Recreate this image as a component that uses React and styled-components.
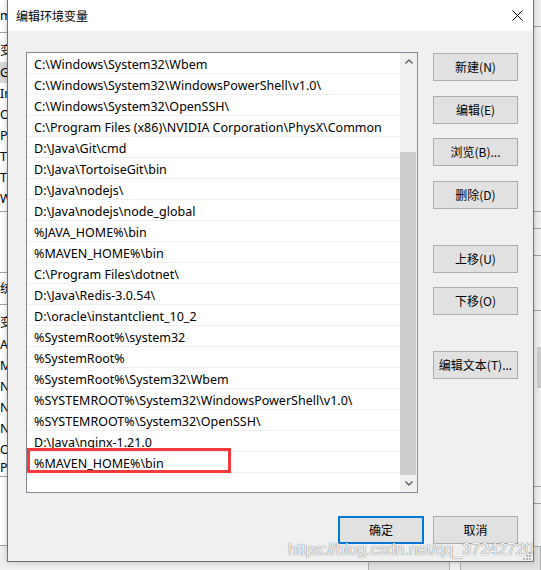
import React from 'react';
import styled, { createGlobalStyle } from 'styled-components';

const GlobalStyle = createGlobalStyle`
  html, body {
    margin: 0;
    padding: 0;
  }
  body {
    background: #f0f0f0;
    font-family: "Noto Sans", "Noto Sans CJK SC", sans-serif;
  }
`;

const paths = [
    'C:\\Windows\\System32\\Wbem',
    'C:\\Windows\\System32\\WindowsPowerShell\\v1.0\\',
    'C:\\Windows\\System32\\OpenSSH\\',
    'C:\\Program Files (x86)\\NVIDIA Corporation\\PhysX\\Common',
    'D:\\Java\\Git\\cmd',
    'D:\\Java\\TortoiseGit\\bin',
    'D:\\Java\\nodejs\\',
    'D:\\Java\\nodejs\\node_global',
    '%JAVA_HOME%\\bin',
    '%MAVEN_HOME%\\bin',
    'C:\\Program Files\\dotnet\\',
    'D:\\Java\\Redis-3.0.54\\',
    'D:\\oracle\\instantclient_10_2',
    '%SystemRoot%\\system32',
    '%SystemRoot%',
    '%SystemRoot%\\System32\\Wbem',
    '%SYSTEMROOT%\\System32\\WindowsPowerShell\\v1.0\\',
    '%SYSTEMROOT%\\System32\\OpenSSH\\',
    'D:\\Java\\nginx-1.21.0',
    '%MAVEN_HOME%\\bin',
];

const sideButtons = [
    { label: '新建(N)', gap: 0 },
    { label: '编辑(E)', gap: 15 },
    { label: '浏览(B)...', gap: 14 },
    { label: '删除(D)', gap: 15 },
    { label: '上移(U)', gap: 36 },
    { label: '下移(O)', gap: 14 },
    { label: '编辑文本(T)...', gap: 36 },
];

// the bit of the window behind that peeks out on the left
const backLeft = [
    { text: 'm', h: 32, bg: '#fff' },
    { line: true },
    { h: 6 },
    { text: '变', h: 23 },
    { text: 'Go', h: 21, bg: '#d9d9d9' },
    { text: 'In', h: 21 },
    { text: 'O', h: 21 },
    { text: 'Pa', h: 21 },
    { text: 'TE', h: 21 },
    { text: 'TM', h: 21 },
    { text: 'W', h: 21 },
    { h: 2 },
    { line: true },
    { h: 60 },
    { line: true },
    { text: '统', h: 31 },
    { line: true },
    { h: 6 },
    { text: '变', h: 23 },
    { text: 'A', h: 21 },
    { text: 'M', h: 21 },
    { text: 'N', h: 21 },
    { text: 'Nc', h: 21 },
    { text: 'N', h: 21 },
    { text: 'OS', h: 21 },
    { text: 'Pa', h: 16 },
    { line: true },
    { h: 68 },
    { line: true },
];

const backRight = [
    { h: 26 },
    { line: true },
    { h: 184 },
    { line: true },
    { h: 16 },
    { line: true },
    { h: 26 },
    { line: true },
    { h: 54 },
    { line: true },
    { h: 175 },
    { line: true },
    { h: 16 },
    { line: true },
];

function CloseIcon() {
    return (
        <svg width="11" height="11" viewBox="0 0 11 11">
            <path d="M0.5 0.5 L10.5 10.5 M10.5 0.5 L0.5 10.5" stroke="#000" strokeWidth="1" fill="none" />
        </svg>
    );
}

function Chevron({ down }) {
    return (
        <svg width="8" height="5" viewBox="0 0 8 5">
            <path
                d={down ? 'M0.5 0.5 L4 4 L7.5 0.5' : 'M0.5 4.5 L4 1 L7.5 4.5'}
                stroke="#606060"
                strokeWidth="1.4"
                fill="none"
            />
        </svg>
    );
}

function Grip() {
    return (
        <svg width="8" height="8" viewBox="0 0 8 8">
            {[[6, 0], [6, 3], [3, 3], [6, 6], [3, 6], [0, 6]].map(([x, y]) => (
                <rect key={x + '-' + y} x={x} y={y} width="2" height="2" fill="#b8b8b8" />
            ))}
        </svg>
    );
}

function App() {
    return (
        <Desktop>
            <GlobalStyle />
            <Backdrop>
                <BackMain>
                    <BackStrip>
                        {backLeft.map((item, i) =>
                            item.line ? <BackLine key={i} /> : (
                                <BackCell key={i} $h={item.h} $bg={item.bg}>{item.text}</BackCell>
                            )
                        )}
                    </BackStrip>
                    <BackStrip $right>
                        {backRight.map((item, i) =>
                            item.line ? <BackLine key={i} /> : <BackCell key={i} $h={item.h} />
                        )}
                        <BackThumb />
                    </BackStrip>
                </BackMain>
                <BackButtons>
                    <BackButton />
                    <BackButton />
                </BackButtons>
            </Backdrop>

            <Dialog>
                <TitleBar>
                    <Title>编辑环境变量</Title>
                    <CloseIcon />
                </TitleBar>
                <Body>
                    <ListBox>
                        <Rows>
                            {paths.map((p, i) => (
                                <Row key={i} $marked={i === paths.length - 1}>{p}</Row>
                            ))}
                        </Rows>
                        <ScrollBar>
                            <ArrowButton><Chevron /></ArrowButton>
                            <Track>
                                <Thumb />
                            </Track>
                            <ArrowButton><Chevron down /></ArrowButton>
                        </ScrollBar>
                    </ListBox>
                    <SideColumn>
                        {sideButtons.map((b) => (
                            <Button key={b.label} $gap={b.gap}>{b.label}</Button>
                        ))}
                    </SideColumn>
                </Body>
                <Footer>
                    <Button $primary $width={86}>确定</Button>
                    <Button>取消</Button>
                </Footer>
                <GripCorner><Grip /></GripCorner>
            </Dialog>

            <Watermark>https://blog.csdn.net/qq_37242720</Watermark>
        </Desktop>
    );
}

const Desktop = styled.div`
    position: relative;
    width: 541px;
    height: 570px;
    overflow: hidden;
    background: #f0f0f0;
`;

const Backdrop = styled.div`
    display: flex;
    flex-direction: column;
    height: 100%;
`;

const BackMain = styled.div`
    display: flex;
    justify-content: space-between;
    height: 566px;
`;

const BackStrip = styled.div`
    position: relative;
    width: ${p => (p.$right ? 7 : 8)}px;
    overflow: hidden;
    display: flex;
    flex-direction: column;
    background: ${p => (p.$right ? '#f0f0f0' : '#fff')};
`;

const BackCell = styled.div`
    flex: none;
    height: ${p => p.$h}px;
    line-height: ${p => p.$h}px;
    background: ${p => p.$bg || 'transparent'};
    font-size: 12.5px;
    font-family: "Noto Sans", "Noto Sans CJK SC", sans-serif;
    color: #000;
    white-space: nowrap;
`;

const BackLine = styled.div`
    flex: none;
    height: 1px;
    background: #a0a0a0;
`;

const BackThumb = styled.div`
    position: absolute;
    left: 3px;
    top: 347px;
    width: 4px;
    height: 41px;
    background: #cdcdcd;
`;

const BackButtons = styled.div`
    display: flex;
    gap: 10px;
    padding-left: 368px;
`;

const BackButton = styled.div`
    width: 85px;
    height: 28px;
    box-sizing: border-box;
    border: 1px solid #adadad;
    background: #e1e1e1;
`;

const Dialog = styled.div`
    position: absolute;
    left: 7px;
    top: -1px;
    width: 527px;
    height: 563px;
    box-sizing: border-box;
    border: 1px solid #707070;
    background: #f0f0f0;
    display: flex;
    flex-direction: column;
    box-shadow: 0 0 6px rgba(0, 0, 0, 0.22);
`;

const TitleBar = styled.div`
    flex: none;
    height: 31px;
    background: #fff;
    display: flex;
    align-items: center;
    justify-content: space-between;
    padding: 0 10px 0 8px;
`;

const Title = styled.span`
    font-family: "Noto Sans CJK SC", sans-serif;
    font-size: 12px;
    color: #000;
`;

const Body = styled.div`
    display: grid;
    grid-template-columns: 392px 85px;
    column-gap: 15px;
    padding: 21px 15px 0 18px;
`;

const ListBox = styled.div`
    display: flex;
    height: 441px;
    box-sizing: border-box;
    border: 1px solid #828790;
    background: #fff;
`;

const Rows = styled.div`
    flex: 1;
    min-width: 0;
`;

const Row = styled.div`
    position: relative;
    height: 21px;
    box-sizing: border-box;
    padding-left: 7px;
    border-bottom: 1px solid #f0f0f0;
    font-family: "Noto Sans", sans-serif;
    font-size: 12.5px;
    line-height: 24px;
    color: #000;
    white-space: nowrap;

    ${p => p.$marked && `
        &::after {
            content: '';
            position: absolute;
            left: 0;
            top: -4px;
            width: 204px;
            height: 25px;
            box-sizing: border-box;
            border: 3px solid #f53b3b;
        }
    `}
`;

const ScrollBar = styled.div`
    flex: none;
    width: 17px;
    display: flex;
    flex-direction: column;
    background: #f0f0f0;
`;

const ArrowButton = styled.div`
    flex: none;
    height: 17px;
    display: flex;
    align-items: center;
    justify-content: center;
`;

const Track = styled.div`
    flex: 1;
    display: flex;
    flex-direction: column;
    justify-content: flex-end;
`;

const Thumb = styled.div`
    height: 323px;
    width: 16px;
    background: #cdcdcd;
`;

const SideColumn = styled.div`
    display: flex;
    flex-direction: column;
    padding-top: 1px;
`;

const Button = styled.div`
    flex: none;
    width: ${p => p.$width || 85}px;
    height: 28px;
    margin-top: ${p => p.$gap || 0}px;
    box-sizing: border-box;
    padding-bottom: 2px;
    border: ${p => (p.$primary ? '2px solid #0078d7' : '1px solid #adadad')};
    background: #e1e1e1;
    display: flex;
    align-items: center;
    justify-content: center;
    font-family: "Noto Sans CJK SC", sans-serif;
    font-size: 12px;
    color: #000;
`;

const Footer = styled.div`
    display: flex;
    justify-content: flex-end;
    gap: 9px;
    padding: 23px 15px 0 0;
`;

const GripCorner = styled.div`
    position: absolute;
    right: 2px;
    bottom: 1px;
    line-height: 0;
`;

const Watermark = styled.div`
    position: absolute;
    left: 288px;
    top: 541px;
    font-family: "Liberation Sans", Arial, sans-serif;
    font-size: 16px;
    line-height: 18px;
    color: rgba(255, 255, 255, 0.95);
    text-shadow: 0 0 1px rgba(90, 90, 90, 0.8), 0 0 1px rgba(90, 90, 90, 0.6);
    white-space: nowrap;
`;

export default App;
